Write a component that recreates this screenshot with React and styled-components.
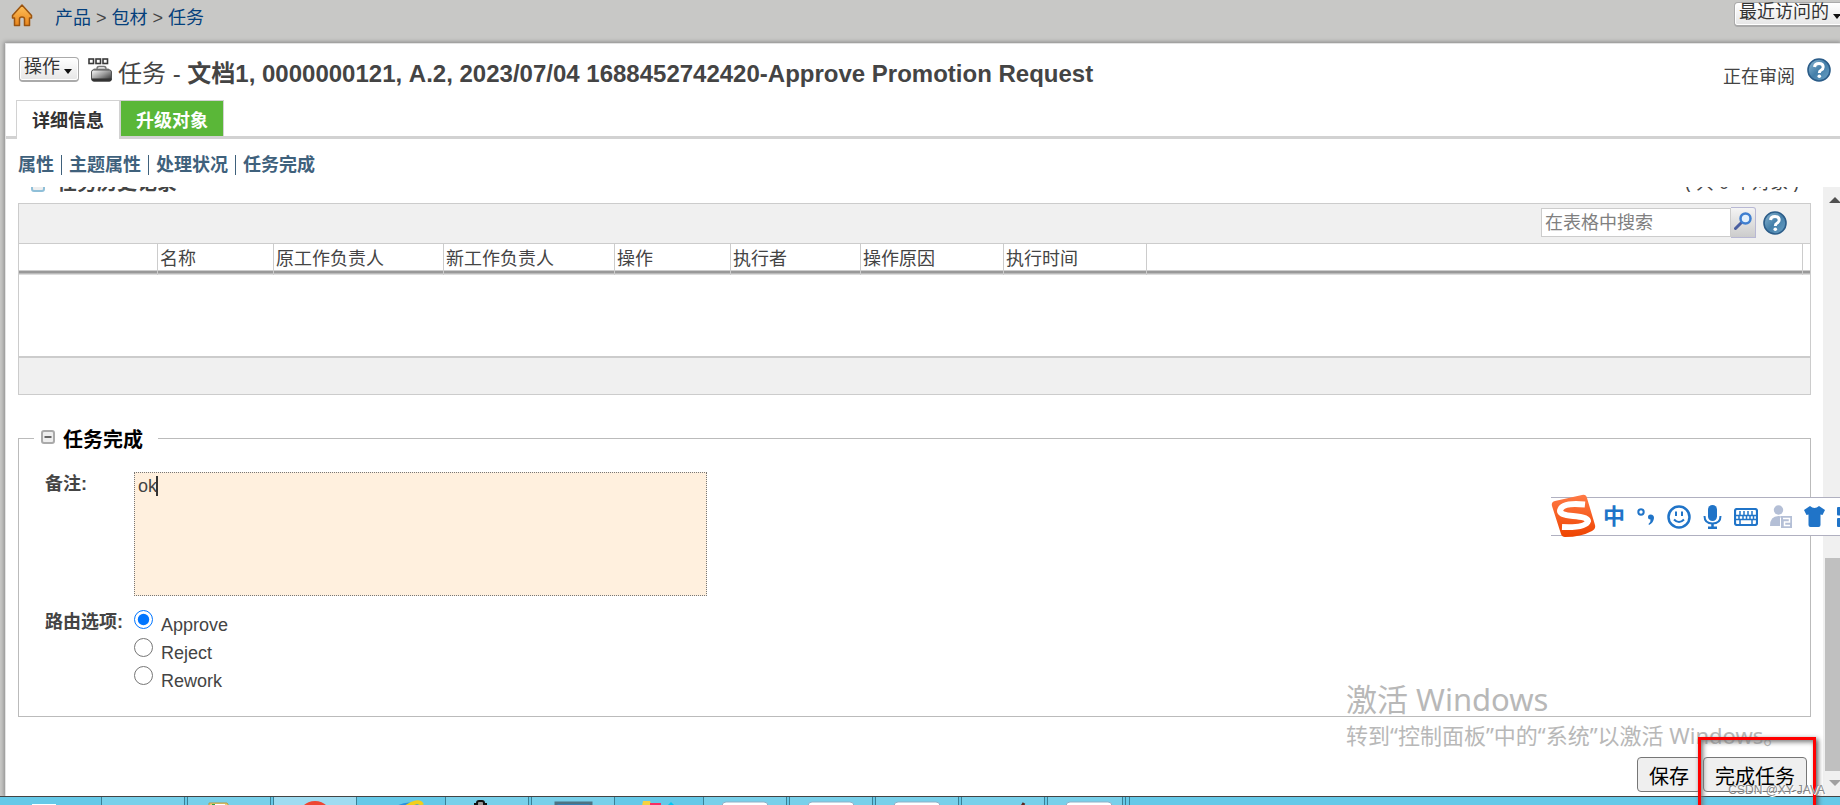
import React, { useState } from 'react'
import styled, { createGlobalStyle, css } from 'styled-components'

const GlobalStyle = createGlobalStyle`
  * {
    box-sizing: border-box;
  }
  body {
    margin: 0;
    overflow: hidden;
    background: #c8c8c6;
    color: #444;
    font: 18px/24px "Liberation Sans", "Noto Sans CJK SC", sans-serif;
  }
  button, input, textarea {
    font-family: inherit;
    color: inherit;
  }
`

const columns = [
  { label: '', width: 139 },
  { label: '名称', width: 116 },
  { label: '原工作负责人', width: 170 },
  { label: '新工作负责人', width: 171 },
  { label: '操作', width: 116 },
  { label: '执行者', width: 130 },
  { label: '操作原因', width: 143 },
  { label: '执行时间', width: 143 },
  { label: '' },
  { label: '', width: 7 },
]

const routes = ['Approve', 'Reject', 'Rework']

const HomeIcon = () => (
  <svg width="22" height="24" viewBox="0 0 22 24" aria-hidden="true">
    <defs>
      <linearGradient id="home" x1="0" y1="0" x2="0" y2="1">
        <stop offset="0" stopColor="#ffc25c" />
        <stop offset="1" stopColor="#e8851c" />
      </linearGradient>
    </defs>
    <path d="M11 1 L1.5 11.5 V14 H3.5 V21.5 H8.5 V15 Q8.5 13 11 13 Q13.5 13 13.5 15 V21.5 H18.5 V14 H20.5 V11.5 Z" fill="url(#home)" stroke="#9a5410" strokeWidth="1.5" strokeLinejoin="round" />
  </svg>
)

const TaskIcon = () => (
  <svg width="24" height="24" viewBox="0 0 24 24" aria-hidden="true">
    <defs>
      <linearGradient id="bag" x1="0" y1="0" x2="1" y2="1">
        <stop offset="0" stopColor="#fff" />
        <stop offset="0.5" stopColor="#999" />
        <stop offset="1" stopColor="#222" />
      </linearGradient>
    </defs>
    <g fill="#fff" stroke="#3a3a3a" strokeWidth="1.6">
      <rect x="1" y="1" width="4.5" height="4.5" />
      <rect x="8" y="1" width="4.5" height="4.5" />
      <rect x="15" y="1" width="4.5" height="4.5" />
    </g>
    <path d="M9 11 Q9 8.5 11 8.500 H16 Q18 8.500 18 11" fill="none" stroke="#777" strokeWidth="1.5" />
    <path d="M6 10.500 H20.500 L23 13 H3.500 Z" fill="#888" />
    <rect x="3.500" y="12" width="20" height="11" rx="2" fill="url(#bag)" stroke="#555" />
    <path d="M4 20.500 H23.500 V21.500 Q23.500 23.500 21.500 23.500 H6 Q4 23.500 4 21.500 Z" fill="#333" />
  </svg>
)

const HelpIcon = () => (
  <svg width="24" height="24" viewBox="0 0 24 24" aria-hidden="true">
    <defs>
      <linearGradient id="help" x1="0" y1="0" x2="1" y2="1">
        <stop offset="0" stopColor="#8fbad4" />
        <stop offset="0.5" stopColor="#457fa9" />
        <stop offset="1" stopColor="#6ba2c6" />
      </linearGradient>
    </defs>
    <circle cx="12" cy="12" r="11" fill="url(#help)" stroke="#2b5c88" strokeWidth="1.6" />
    <path d="M7.500 9 Q7.800 5.500 12 5.500 Q16.200 5.500 16.200 9 Q16.200 11 14.200 12 Q12.300 13 12.300 15" fill="none" stroke="#fff" strokeWidth="3" />
    <circle cx="12.300" cy="18.200" r="1.800" fill="#fff" />
  </svg>
)

const SearchIcon = () => (
  <svg width="18" height="18" viewBox="0 0 18 18" aria-hidden="true">
    <path d="M1.500 16.500 L7 11" stroke="#4a5fa0" strokeWidth="3" strokeLinecap="round" />
    <circle cx="11.500" cy="6.500" r="5" fill="#e4f1fc" stroke="#3f7fd0" strokeWidth="2.500" />
  </svg>
)

const CollapseIcon = ({ edge = '#aaa' }) => (
  <svg width="14" height="14" viewBox="0 0 14 14" aria-hidden="true">
    <rect x="1" y="1" width="12" height="12" rx="2" fill="#eee" stroke={edge} strokeWidth="2" />
    <path d="M3.500 7 H10.500" stroke="#666" strokeWidth="2" />
  </svg>
)

const Caret = () => (
  <svg width="8" height="5" viewBox="0 0 8 5" aria-hidden="true">
    <path d="M0 0 H8 L4 5 Z" fill="#111" />
  </svg>
)

const ImeLogo = () => (
  <svg width="46" height="44" viewBox="0 0 46 44" aria-hidden="true">
    <defs>
      <linearGradient id="ime" x1="0" y1="0" x2="0" y2="1">
        <stop offset="0" stopColor="#ff7a45" />
        <stop offset="1" stopColor="#ee4300" />
      </linearGradient>
    </defs>
    <path d="M4 7 L31 1 Q35 0 36 4 L44 31 Q45 35 41 37 Q30 43 14 43 Q11 43 10 40 L1 12 Q0 8 4 7 Z" fill="url(#ime)" />
    <path d="M34 10.500 Q10 8 9 17 Q9 21 22 22 Q37 23 37 27 Q35 34 11 33" fill="none" stroke="#fff" strokeWidth="6" />
  </svg>
)

const PunctuationIcon = () => (
  <svg width="18" height="18" viewBox="0 0 18 18" aria-hidden="true">
    <circle cx="4" cy="4" r="2.700" fill="none" stroke="#2074c8" strokeWidth="2" />
    <path d="M11 9 Q11 6.500 13.500 6.500 Q17 6.500 17 10 Q16.500 15 12 17 L11.500 16 Q14 14 13.500 11.500 Q11 11.500 11 9 Z" fill="#2074c8" />
  </svg>
)

const SmileIcon = () => (
  <svg width="24" height="24" viewBox="0 0 24 24" fill="none" stroke="#2074c8" strokeWidth="2.500" aria-hidden="true">
    <circle cx="12" cy="12" r="10.500" />
    <path d="M9 6.500 V11 M15 6.500 V11 M7 14.500 Q12 19.500 17 14.500" strokeWidth="2" />
  </svg>
)

const MicIcon = () => (
  <svg width="19" height="24" viewBox="0 0 19 24" aria-hidden="true">
    <rect x="5" y="0" width="9" height="16" rx="4.500" fill="#2074c8" />
    <path d="M1.500 11 Q1.500 18.500 9.500 18.500 Q17.500 18.500 17.500 11" fill="none" stroke="#2074c8" strokeWidth="2" />
    <path d="M9.500 18 V23 M5 22.800 H14" stroke="#2074c8" strokeWidth="2.500" />
  </svg>
)

const KeyboardIcon = () => (
  <svg width="24" height="18" viewBox="0 0 24 18" fill="none" stroke="#2074c8" aria-hidden="true">
    <rect x="1" y="1" width="22" height="16" rx="2" fill="#fff" strokeWidth="2.200" />
    <path d="M2 7.500 H22 M2 11.500 H22" strokeWidth="1.500" />
    <path d="M6 3 V7 M10 3 V7 M14 3 V7 M18 3 V7 M5 8 V11 M9 8 V11 M12.500 8 V11 M16 8 V11 M19.500 8 V11 M6 12 V16 M18 12 V16" strokeWidth="1.500" />
  </svg>
)

const PersonIcon = () => (
  <svg width="22" height="23" viewBox="0 0 22 23" aria-hidden="true">
    <circle cx="8.500" cy="5" r="4.700" fill="#b4bfd6" />
    <path d="M0 21 Q0 11 8.500 11 Q12 11 14 12.500 H10 V21 Z" fill="#b4bfd6" />
    <rect x="11" y="11" width="11" height="12" fill="#b4bfd6" />
    <path d="M13 13.500 H19.500 V17 H14.500 V20.500 H20" fill="none" stroke="#fff" strokeWidth="1.500" />
  </svg>
)

const ShirtIcon = () => (
  <svg width="21" height="21" viewBox="0 0 21 21" aria-hidden="true">
    <path d="M6 0 Q10.500 4 15 0 L21 4 L18.500 9 L16.500 8.500 V19 Q16.500 21 14.500 21 H6.500 Q4.500 21 4.500 19 V8.500 L2.500 9 L0 4 Z" fill="#2074c8" />
  </svg>
)

const GridIcon = () => (
  <svg width="19" height="20" viewBox="0 0 19 20" fill="#2074c8" aria-hidden="true">
    <rect width="8" height="8.500" rx="1" />
    <rect y="11" width="8" height="9" rx="1" />
    <rect x="11" width="8" height="8.500" rx="1" />
    <rect x="11" y="11" width="8" height="9" rx="1" />
  </svg>
)

// only the upper edge of each taskbar icon shows above the screen bottom
const taskIcons = {
  server: <path d="M11 24 V8 H33 V24" fill="#1e8fdc" stroke="#fff" strokeWidth="2" />,
  folder: (
    <>
      <path d="M22 24 V6 H40 L42 9 H62 V24 Z" fill="#e8cf7c" stroke="#b99a3e" />
      <rect x="25" y="7" width="13" height="9" fill="#fff" />
      <rect x="25" y="7" width="3" height="9" fill="#2fa34a" />
    </>
  ),
  chrome: <circle cx="42" cy="21" r="17" fill="#ee4632" />,
  ie: (
    <>
      <path d="M38 11 Q50 4 62 11" fill="none" stroke="#2b8fe0" strokeWidth="4" />
      <path d="M44 12 Q60 1 63 8" fill="none" stroke="#f2cf1c" strokeWidth="4" />
    </>
  ),
  tool: (
    <>
      <path d="M24 9 H28 M43 9 H47 M29 7 H42" stroke="#111" strokeWidth="2" />
      <rect x="32" y="4" width="7" height="12" rx="2" fill="#999" stroke="#111" strokeWidth="2" />
    </>
  ),
  monitor: <path d="M25 24 V6 H60 V24" fill="#1f8fe4" stroke="#4c7384" strokeWidth="3" />,
  photos: (
    <>
      <path d="M26 4 H33 L37 14 H24 Z" fill="#f6d140" />
      <rect x="33" y="6" width="11" height="10" fill="#f82e62" />
      <path d="M49 10 L54 5 L59 10 Z" fill="#00c8f5" />
    </>
  ),
  page: (
    <>
      <rect x="19" y="5" width="46" height="20" rx="4" fill="#fff" stroke="#8fb0c8" />
      <rect x="45" y="8" width="2" height="2" fill="#f0c9a0" />
    </>
  ),
  brush: (
    <>
      <path d="M20 9 H44" stroke="#8a6a50" strokeWidth="2" strokeDasharray="2 1" />
      <path d="M60 11 L63 6" stroke="#5a2a20" strokeWidth="3" />
    </>
  ),
}

const tasks = [
  { name: '服务器管理器', icon: 'server', first: true, width: 101 },
  { name: '窗口', boxed: true },
  { name: '文件夹', icon: 'folder', boxed: true },
  { name: '浏览器', icon: 'chrome', active: true },
  { name: 'IE', icon: 'ie' },
  { name: '工具', icon: 'tool', boxed: true },
  { name: '远程', icon: 'monitor', boxed: true },
  { name: '图片', icon: 'photos' },
  { name: '文档 1', icon: 'page', boxed: true },
  { name: '文档 2', icon: 'page', boxed: true },
  { name: '文档 3', icon: 'page', boxed: true },
  { name: '画图', icon: 'brush', boxed: true },
  { name: '文档 4', icon: 'page', boxed: true, width: 76 },
]

const App = () => {
  const [route, setRoute] = useState('Approve')
  const [note, setNote] = useState('ok')

  return (
    <Screen>
      <GlobalStyle />
      <TopBar>
        <Crumbs>
          <HomeLink href="#home" aria-label="首页"><HomeIcon /></HomeLink>
          <Crumb href="#products">产品</Crumb>
          <span>&gt;</span>
          <Crumb href="#package">包材</Crumb>
          <span>&gt;</span>
          <Crumb href="#task">任务</Crumb>
        </Crumbs>
        <MenuButton $edge>最近访问的<Caret /></MenuButton>
      </TopBar>

      <Panel>
        <Head>
          <MenuButton>操作<Caret /></MenuButton>
          <TaskIcon />
          <Title>
            任务 - <b>文档1, 0000000121, A.2, 2023/07/04 1688452742420-Approve Promotion Request</b>
          </Title>
          <Status>正在审阅</Status>
          <IconButton aria-label="帮助"><HelpIcon /></IconButton>
        </Head>
        <Tabs>
          <Tab $current>详细信息</Tab>
          <Tab>升级对象</Tab>
        </Tabs>
        <Links>
          <SubLink href="#props">属性</SubLink>
          <SubLink href="#subject">主题属性</SubLink>
          <SubLink href="#progress">处理状况</SubLink>
          <SubLink href="#complete">任务完成</SubLink>
        </Links>

        <Pane>
          <Content>
            <ScrolledHeading>
              <CollapseIcon edge="#8fbfd8" />
              <HistoryTitle>任务历史记录</HistoryTitle>
              <Count>( 共 0 个对象 )</Count>
            </ScrolledHeading>

            <Grid>
              <GridBar>
                <SearchInput type="text" aria-label="在表格中搜索" placeholder="在表格中搜索" />
                <SearchButton aria-label="搜索"><SearchIcon /></SearchButton>
                <IconButton aria-label="表格帮助"><HelpIcon /></IconButton>
              </GridBar>
              <Table>
                <colgroup>
                  {columns.map((c, i) => <col key={i} width={c.width} />)}
                </colgroup>
                <thead>
                  <tr>{columns.map((c, i) => <Th key={i}>{c.label}</Th>)}</tr>
                </thead>
                <tbody>
                  <tr><EmptyCell colSpan={columns.length} /></tr>
                </tbody>
              </Table>
              <GridFoot />
            </Grid>

            <Section>
              <Legend><CollapseIcon />任务完成</Legend>
              <Form>
                <Label htmlFor="note">备注:</Label>
                <NoteBox>
                  <Note id="note" value={note} onChange={e => setNote(e.target.value)} />
                  <TextCursor />
                </NoteBox>
                <Label as="span" id="route">路由选项:</Label>
                <Options role="radiogroup" aria-labelledby="route">
                  {routes.map(r => (
                    <Option key={r}>
                      <Radio name="route" checked={route === r} onChange={() => setRoute(r)} />
                      <span>{r}</span>
                    </Option>
                  ))}
                </Options>
              </Form>
            </Section>

            <Actions>
              <ActionButton>保存</ActionButton>
              <ActionButton>完成任务</ActionButton>
            </Actions>
          </Content>
          <Scrollbar>
            <Arrow viewBox="0 0 12 6"><path d="M0 6 L6 0 L12 6 Z" fill="#505050" /></Arrow>
            <Thumb />
            <Arrow viewBox="0 0 12 6"><path d="M0 0 L6 6 L12 0 Z" fill="#a0a0a0" /></Arrow>
          </Scrollbar>
        </Pane>
      </Panel>

      <Taskbar>
        {tasks.map(t => (
          <Task key={t.name} aria-label={t.name} $boxed={t.boxed} $active={t.active} $first={t.first} $width={t.width}>
            <svg width="84" height="24" viewBox="0 0 84 24" aria-hidden="true">{taskIcons[t.icon]}</svg>
          </Task>
        ))}
        <TaskEdge />
      </Taskbar>

      <Activation>
        <h2>激活 Windows</h2>
        <p>转到“控制面板”中的“系统”以激活 Windows。</p>
      </Activation>

      <ImeBar>
        <ImeLogo />
        <ImeMode>中</ImeMode>
        <PunctuationIcon />
        <SmileIcon />
        <MicIcon />
        <KeyboardIcon />
        <PersonIcon />
        <ShirtIcon />
        <GridIcon />
      </ImeBar>

      <Highlight />
      <Credit>CSDN @XY-JAVA</Credit>
    </Screen>
  )
}

const Screen = styled.div`
  position: relative;
  display: flex;
  flex-direction: column;
  height: 100vh;
  overflow: hidden;
`

const TopBar = styled.header`
  flex: none;
  display: flex;
  justify-content: space-between;
  height: 43px;
`

const Crumbs = styled.nav`
  display: flex;
  align-items: center;
  gap: 5px;
  height: 36px;
  padding: 0 0 0 11px;
`

const HomeLink = styled.a`
  display: flex;
  margin-right: 17px;
  padding-bottom: 5px;
`

const Crumb = styled.a`
  color: #04407c;
  text-decoration: none;
`

const MenuButton = styled.button`
  flex: none;
  display: flex;
  align-items: center;
  gap: 4px;
  height: 25px;
  padding: 0 6px 4px 4px;
  border: 1px solid #aaa;
  border-bottom-width: 2px;
  border-radius: 4px;
  background: linear-gradient(#fff, #e6e6e6);
  box-shadow: inset 0 0 0 1px #fff;
  color: #333;
  font-size: 18px;
  line-height: 18px;
  white-space: nowrap;

  svg {
    margin-top: 8px;
  }

  ${p => p.$edge && css`
    margin: 2px -8px 0 0;
  `}
`

const Panel = styled.main`
  flex: 1;
  display: flex;
  flex-direction: column;
  min-height: 0;
  margin-left: 5px;
  border-top: 1px solid #e4e4e4;
  border-left: 1px solid #e4e4e4;
  background: #fff;
  box-shadow: 0 0 4px 1px #888;
`

const Head = styled.div`
  flex: none;
  display: flex;
  align-items: center;
  height: 56px;
  padding: 0 9px 4px 13px;

  > svg {
    flex: none;
    margin: 0 6px 0 9px;
  }
  > button:first-child {
    margin-bottom: 1px;
  }
`

const Title = styled.h1`
  flex: 1;
  margin: 8px 0 0;
  font-size: 24px;
  font-weight: normal;
  line-height: 32px;
  white-space: nowrap;
`

const Status = styled.span`
  margin: 14px 12px 0 0;
`

const IconButton = styled.button`
  display: flex;
  padding: 0;
  border: 0;
  background: none;
`

const Tabs = styled.div`
  flex: none;
  display: flex;
  height: 39px;
  padding-left: 10px;
  box-shadow: inset 0 -3px #d2d2d2;
`

const Tab = styled.button`
  height: 36px;
  padding: 0 15px;
  border: 1px solid #d2d2d2;
  border-bottom: 0;
  background: #5ab738;
  color: #fff;
  font-size: 18px;
  font-weight: bold;

  ${p => p.$current && css`
    height: 39px;
    padding-bottom: 3px;
    background: #fff;
    color: #333;
  `}
`

const Links = styled.nav`
  flex: none;
  display: flex;
  align-items: center;
  height: 48px;
  padding: 3px 0 0 12px;
`

const SubLink = styled.a`
  color: #3f617c;
  font-weight: bold;
  line-height: 20px;
  text-decoration: none;

  & + & {
    margin-left: 7px;
    padding-left: 7px;
    border-left: 1px solid #3f617c;
  }
`

const Pane = styled.div`
  flex: 1;
  display: flex;
  min-height: 0;
`

const Content = styled.div`
  flex: 1;
  padding: 0 12px;
`

// bottom edge of the heading that has been scrolled out of view
const ScrolledHeading = styled.div`
  display: flex;
  align-items: flex-end;
  height: 5px;
  margin-bottom: 11px;
  padding: 0 12px 0 13px;
  overflow: hidden;
`

const HistoryTitle = styled.h2`
  flex: 1;
  margin: 0 0 -5px 12px;
  font-size: 20px;
  line-height: 28px;
`

const Count = styled.span`
  margin-bottom: -3px;
`

const Grid = styled.section`
  border: 1px solid #ccc;
`

const GridBar = styled.div`
  display: flex;
  align-items: center;
  justify-content: flex-end;
  height: 40px;
  padding: 0 23px 2px 0;
  border-bottom: 1px solid #ccc;
  background: #f0f0f0;
`

const SearchInput = styled.input`
  width: 190px;
  height: 29px;
  padding: 2px 3px 0;
  border: 1px solid #ccc;
  background: #fff;
  font-size: 18px;

  &::placeholder {
    color: #808080;
  }
`

const SearchButton = styled.button`
  display: flex;
  align-items: center;
  justify-content: center;
  width: 25px;
  height: 31px;
  margin-right: 7px;
  padding: 0 0 3px;
  border: 1px solid #b8b8d4;
  border-left: 0;
  border-radius: 0 3px 0 0;
  background: linear-gradient(#f4f4f4, #ccc);
`

const Table = styled.table`
  width: 100%;
  border-spacing: 0;
  table-layout: fixed;
`

const Th = styled.th`
  height: 31px;
  padding: 0 0 2px 2px;
  border-right: 1px solid #ccc;
  background: linear-gradient(#ccc 1px, #999 1px, #999 3px, #bbb 3px, #bbb 4px, #ddd 4px) bottom / 100% 5px no-repeat;
  font-weight: normal;
  text-align: left;

  &:last-child {
    border-right: 0;
  }
`

const EmptyCell = styled.td`
  height: 81px;
  padding: 0;
`

const GridFoot = styled.div`
  height: 38px;
  border-top: 2px solid #ccc;
  background: #f0f0f0;
`

const Section = styled.fieldset`
  min-width: 0;
  margin: 28px 0 0;
  padding: 18px 26px 22px;
  border: 1px solid #bbb;
`

const Legend = styled.legend`
  display: flex;
  align-items: center;
  gap: 8px;
  margin-left: -11px;
  padding: 3px 15px 0 7px;
  color: #000;
  font-size: 20px;
  font-weight: bold;
  line-height: 28px;

  svg {
    margin-bottom: 6px;
  }
`

const Form = styled.div`
  display: grid;
  grid-template-columns: 89px 1fr;
  row-gap: 14px;
`

const Label = styled.label`
  font-weight: bold;
`

const NoteBox = styled.div`
  position: relative;
  width: 573px;
  height: 124px;
`

const Note = styled.textarea`
  display: block;
  width: 100%;
  height: 100%;
  padding: 3px;
  border: 1px dotted #777;
  background: #fff0de;
  font-size: 18px;
  line-height: 21px;
  resize: none;
`

const TextCursor = styled.i`
  position: absolute;
  top: 4px;
  left: 22px;
  width: 2px;
  height: 20px;
  background: #333;
`

const Options = styled.div`
  display: flex;
  flex-direction: column;
`

const Option = styled.label`
  display: flex;
  gap: 8px;
  height: 28px;

  span {
    padding-top: 3px;
  }
`

const Radio = styled.input.attrs({ type: 'radio' })`
  width: 19px;
  height: 19px;
  margin: 0;
  accent-color: #0075ff;
`

const Actions = styled.div`
  display: flex;
  justify-content: flex-end;
  gap: 2px;
  margin-top: 40px;
  padding-right: 4px;
`

const ActionButton = styled.button`
  height: 35px;
  padding: 2px 11px 0;
  border: 1px solid #767676;
  border-radius: 4px;
  background: #efefef;
  color: #000;
  font-size: 20px;
`

const Scrollbar = styled.div`
  flex: none;
  display: flex;
  flex-direction: column;
  width: 17px;
  padding: 10px 0;
  background: #f0f0f0;
`

const Arrow = styled.svg`
  flex: none;
  width: 12px;
  height: 6px;
  margin-left: 6px;
`

const Thumb = styled.div`
  height: 213px;
  margin: auto 0 9px 2px;
  background: #c0c0c0;
`

const Taskbar = styled.footer`
  position: relative;
  flex: none;
  display: flex;
  height: 9px;
  overflow: hidden;
  border-top: 1px solid #444;
  background: #65c9e8;
`

const Task = styled.button`
  flex: none;
  display: flex;
  width: ${p => p.$width || 84}px;
  height: 40px;
  margin-right: ${p => (p.$first ? 0 : 2)}px;
  padding: ${p => (p.$first ? '0 0 0 22px' : 0)};
  overflow: hidden;
  border: 0;
  background: ${p => (p.$active ? '#9fdcf1' : p.$boxed ? '#78d0ea' : 'transparent')};
  box-shadow: ${p => (p.$boxed || p.$active ? 'inset 1px 0 #3a7f94, inset -1px 0 #3a7f94' : 'none')};

  svg {
    flex: none;
  }
`

const TaskEdge = styled.i`
  width: 5px;
  border-right: 1px solid #3a7f94;
  border-left: 1px solid #3a7f94;
`

const Activation = styled.aside`
  position: absolute;
  right: 58px;
  bottom: 53px;
  width: 436px;
  color: #b8b8b8;
  font-family: "Noto Sans", "Noto Sans CJK SC", sans-serif;
  white-space: nowrap;
  pointer-events: none;

  h2 {
    margin: 0;
    font-size: 31px;
    font-weight: normal;
    line-height: 38px;
  }
  p {
    margin: 0;
    font-size: 22px;
    line-height: 34px;
  }
`

const ImeBar = styled.aside`
  position: absolute;
  top: 497px;
  right: -16px;
  display: flex;
  align-items: center;
  gap: 12px;
  height: 39px;
  border: 1px solid #b0b0c0;
  border-width: 1px 0;
  background: #fff;

  svg:first-child {
    margin: 0 -6px 2px 0;
  }
`

const ImeMode = styled.b`
  color: #2074c8;
  font-size: 22px;
  line-height: 32px;
`

const Highlight = styled.div`
  position: absolute;
  right: 24px;
  bottom: -10px;
  width: 118px;
  height: 78px;
  border: 3px solid #f00;
  box-shadow: 2px 2px 5px #555, inset 2px 2px 5px #777;
  pointer-events: none;
`

const Credit = styled.small`
  position: absolute;
  right: 15px;
  bottom: 6px;
  color: #888;
  font-size: 12px;
  line-height: 18px;
  text-shadow: 1px 1px #fff;
`

export default App
